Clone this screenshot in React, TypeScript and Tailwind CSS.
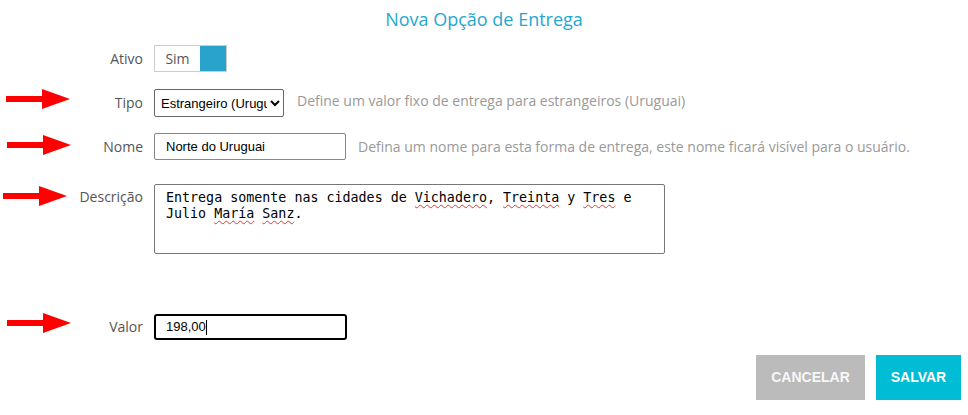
import React from 'react'

const Arrow: React.FC<{ className?: string }> = ({ className }) => (
  <svg width="66" height="20" viewBox="0 0 66 20" className={className}>
    <rect x="0" y="7" width="38" height="6" fill="#ff0000" />
    <polygon points="36,0 64,10 36,20" fill="#ff0000" />
  </svg>
)

const Label: React.FC<{ text: string; arrow?: boolean; arrowClass?: string }> = ({ text, arrow, arrowClass = '' }) => (
  <div className="w-[143px] shrink-0 flex items-center">
    {arrow && <Arrow className={arrowClass} />}
    <span className="ml-auto text-[14px] leading-[20px] text-[#555]">{text}</span>
  </div>
)

const Squiggle: React.FC<{ children: React.ReactNode }> = ({ children }) => (
  <span className="underline decoration-wavy decoration-[#e53935] decoration-1 underline-offset-[2px]">
    {children}
  </span>
)

export default function App() {
  return (
    <div className="w-full h-[415px] bg-white font-['Open_Sans',sans-serif]">
      <h1 className="pt-[7px] text-center text-[18px] leading-[24px] text-[#25a7cf]">Nova Opção de Entrega</h1>

      <div className="mt-[14px] flex items-center">
        <Label text="Ativo" />
        <div className="ml-[11px] flex h-[27px] border border-[#ccc]">
          <span className="w-[45px] flex items-center justify-center text-[14px] text-[#555]">Sim</span>
          <div className="w-[26px] bg-[#29a2cc]" />
        </div>
      </div>

      <div className="mt-[17px] flex items-center">
        <Label text="Tipo" arrow arrowClass="ml-[6px] -mt-[8px]" />
        <select
          defaultValue="uy"
          className="ml-[11px] h-[28px] w-[130px] border border-[#666] rounded-[2px] pl-[2px] text-[13px] text-black font-['Liberation_Sans',Arial,sans-serif]"
        >
          <option value="uy">Estrangeiro (Uruguai)</option>
        </select>
        <span className="ml-[13px] -mt-[5px] text-[14px] text-[#999]">
          Define um valor fixo de entrega para estrangeiros (Uruguai)
        </span>
      </div>

      <div className="mt-[16px] flex items-center">
        <Label text="Nome" arrow arrowClass="ml-[7px] -mt-[3px]" />
        <div className="ml-[11px] h-[27px] w-[192px] border border-[#888] rounded-[2px] pl-[11px] flex items-center text-[13px] text-black font-['Liberation_Sans',Arial,sans-serif]">
          Norte do Uruguai
        </div>
        <span className="ml-[12px] text-[14px] text-[#999]">
          Defina um nome para esta forma de entrega, este nome ficará visível para o usuário.
        </span>
      </div>

      <div className="mt-[24px] flex items-start">
        <div className="w-[143px] shrink-0 flex items-start pt-[3px]">
          <Arrow className="ml-[3px] -mt-[1px]" />
          <span className="ml-auto text-[14px] leading-[20px] text-[#555]">Descrição</span>
        </div>
        <div className="ml-[11px] h-[70px] w-[511px] border border-[#777] rounded-[2px] pl-[11px] pt-[5px] text-[13.33px] leading-[16px] text-black font-['DejaVu_Sans_Mono',monospace]">
          Entrega somente nas cidades de <Squiggle>Vichadero</Squiggle>, <Squiggle>Treinta</Squiggle> y{' '}
          <Squiggle>Tres</Squiggle> e
          <br />
          Julio <Squiggle>María</Squiggle> <Squiggle>Sanz</Squiggle>.
        </div>
      </div>

      <div className="mt-[60px] flex items-center">
        <Label text="Valor" arrow arrowClass="ml-[7px] -mt-[8px]" />
        <div className="ml-[11px] h-[26px] w-[193px] border-2 border-black rounded-[3px] pl-[10px] flex items-center text-[13px] text-black font-['Liberation_Sans',Arial,sans-serif]">
          198,00
          <span className="inline-block w-px h-[15px] bg-black" />
        </div>
      </div>

      <div className="mt-[15px] flex justify-end gap-[11px] pr-[7px] font-['Liberation_Sans',Arial,sans-serif]">
        <button className="h-[45px] w-[109px] bg-[#bbbbbb] text-[14px] font-bold text-[#f7f7f7]">CANCELAR</button>
        <button className="h-[45px] w-[85px] bg-[#00bcd4] text-[14px] font-bold text-white">SALVAR</button>
      </div>
    </div>
  )
}
